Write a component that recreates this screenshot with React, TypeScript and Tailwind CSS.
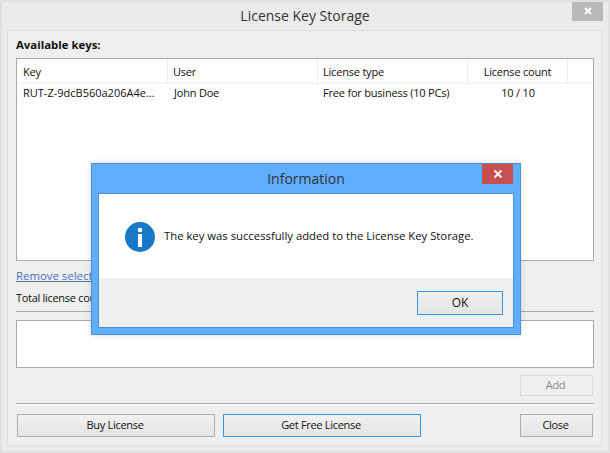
import React from 'react';

const font = { fontFamily: '"Open Sans", "Noto Sans", sans-serif' };

function Btn({ label, width, focused, disabled }: { label: string; width: string; focused?: boolean; disabled?: boolean }) {
  let cls = 'border-[#acacac] bg-gradient-to-b from-[#f0f0f0] to-[#e5e5e5] text-[#111]';
  if (focused) cls = 'border-[#3d94e6] bg-gradient-to-b from-[#f0f0f0] to-[#e5e5e5] text-[#111]';
  if (disabled) cls = 'border-[#d9d9d9] bg-[#efefef] text-[#8f8f8f]';
  return (
    <button className={`${width} h-[23px] border flex items-center justify-center pr-[2px] text-[11px] tracking-[-0.3px] ${cls}`}>
      {label}
    </button>
  );
}

function HeaderCell({ label, width, className }: { label: string; width: string; className?: string }) {
  return (
    <div className={`${width} h-full flex items-center border-r border-[#e6eef8] pt-[2px] ${className ?? 'pl-[6px]'}`}>
      {label}
    </div>
  );
}

export default function App() {
  return (
    <div className="relative w-[610px] h-[453px] overflow-hidden bg-[#ebebeb] border-2 border-[#e0e0e0] text-[11px] text-[#111] box-border" style={font}>
      {/* main window */}
      <div className="relative h-[28px] flex items-center justify-center text-[14px] text-[#333]">
        <span className="mb-[2px]">License Key Storage</span>
        <div className="absolute right-[5px] top-[-1px] w-[31px] h-[20px] bg-[#b9b9b9] flex items-center justify-center">
          <svg width="10" height="10" viewBox="0 0 10 10"><path d="M2 2l6 6M8 2l-6 6" stroke="#fff" strokeWidth="1.8" /></svg>
        </div>
      </div>
      <div className="ml-[5px] w-[595px] h-[416px] bg-[#efefef] border border-[#dcdcdc] px-[8px] pt-[8px]">
        <div className="font-bold h-[20px] leading-[14px] mt-[-1px] text-[11.4px]">Available keys:</div>
        <div className="w-[578px] h-[203px] bg-white border border-[#a8a8b0] tracking-[-0.2px]">
          <div className="flex h-[25px] border-b border-[#eef2f8] bg-[#fdfdfd]">
            <HeaderCell label="Key" width="w-[151px]" />
            <HeaderCell label="User" width="w-[150px]" className="pl-[5px]" />
            <HeaderCell label="License type" width="w-[150px]" className="pl-[5px]" />
            <HeaderCell label="License count" width="w-[100px]" className="justify-center" />
          </div>
          <div className="flex h-[19px] items-center">
            <div className="w-[151px] pl-[6px] whitespace-nowrap tracking-normal">RUT-Z-9dcB560a206A4e…</div>
            <div className="w-[150px] pl-[6px]">John Doe</div>
            <div className="w-[150px] pl-[5px]">Free for business (10 PCs)</div>
            <div className="w-[100px] text-center">10 / 10</div>
          </div>
        </div>
        <div className="mt-[6px] h-[16px] text-[11.4px] text-[#4a6fb0] underline">Remove selected key</div>
        <div className="mt-[7px] h-[16px] tracking-[-0.3px]">Total license count: 10</div>
        <div className="mt-[5px] w-[578px] border-t border-[#a8a8a8]" />
        <div className="mt-[8px] w-[578px] h-[48px] bg-white border border-[#a8a8a8]" />
        <div className="mt-[7px] flex justify-end">
          <Btn label="Add" width="w-[73px] !h-[21px]" disabled />
        </div>
        <div className="mt-[7px] w-[578px] border-t border-[#a8a8a8] border-b-white border-b h-[2px]" />
        <div className="mt-[9px] flex pl-[1px]">
          <Btn label="Buy License" width="w-[198px]" />
          <div className="w-[8px]" />
          <Btn label="Get Free License" width="w-[198px]" focused />
          <div className="flex-1" />
          <Btn label="Close" width="w-[73px]" />
        </div>
      </div>

      {/* modal dialog */}
      <div className="absolute left-[89px] top-[161px] w-[430px] h-[172px] bg-[#60aefe] border border-[#4c8fd2] shadow-[0_0_6px_rgba(0,0,0,0.15)] flex flex-col">
        <div className="relative h-[29px] flex items-center justify-center text-[14px] text-[#333]">
          <span>Information</span>
          <div className="absolute right-[7px] top-0 w-[31px] h-[20px] bg-[#c75050] flex items-center justify-center">
            <svg width="10" height="10" viewBox="0 0 10 10"><path d="M1.5 1.5l7 7M8.5 1.5l-7 7" stroke="#fff" strokeWidth="1.8" /></svg>
          </div>
        </div>
        <div className="mx-[6px] mb-[6px] flex-1 border border-[#4c8fd2] flex flex-col">
          <div className="h-[84px] bg-white flex items-center pl-[26px] pt-[1px]">
            <svg width="30" height="30" viewBox="0 0 30 30">
              <circle cx="15" cy="15" r="15" fill="#1a78c9" />
              <circle cx="15" cy="8" r="2.3" fill="#fff" />
              <rect x="13" y="12" width="4" height="13" fill="#fff" />
            </svg>
            <span className="ml-[9px] text-[11.3px]">The key was successfully added to the License Key Storage.</span>
          </div>
          <div className="flex-1 bg-[#efefef] flex justify-end pr-[10px] pt-[13px]">
            <button className="w-[86px] h-[24px] border border-[#3d94e6] bg-gradient-to-b from-[#f0f0f0] to-[#e5e5e5] text-[12px] text-[#111] flex items-center justify-center">
              OK
            </button>
          </div>
        </div>
      </div>
    </div>
  );
}
